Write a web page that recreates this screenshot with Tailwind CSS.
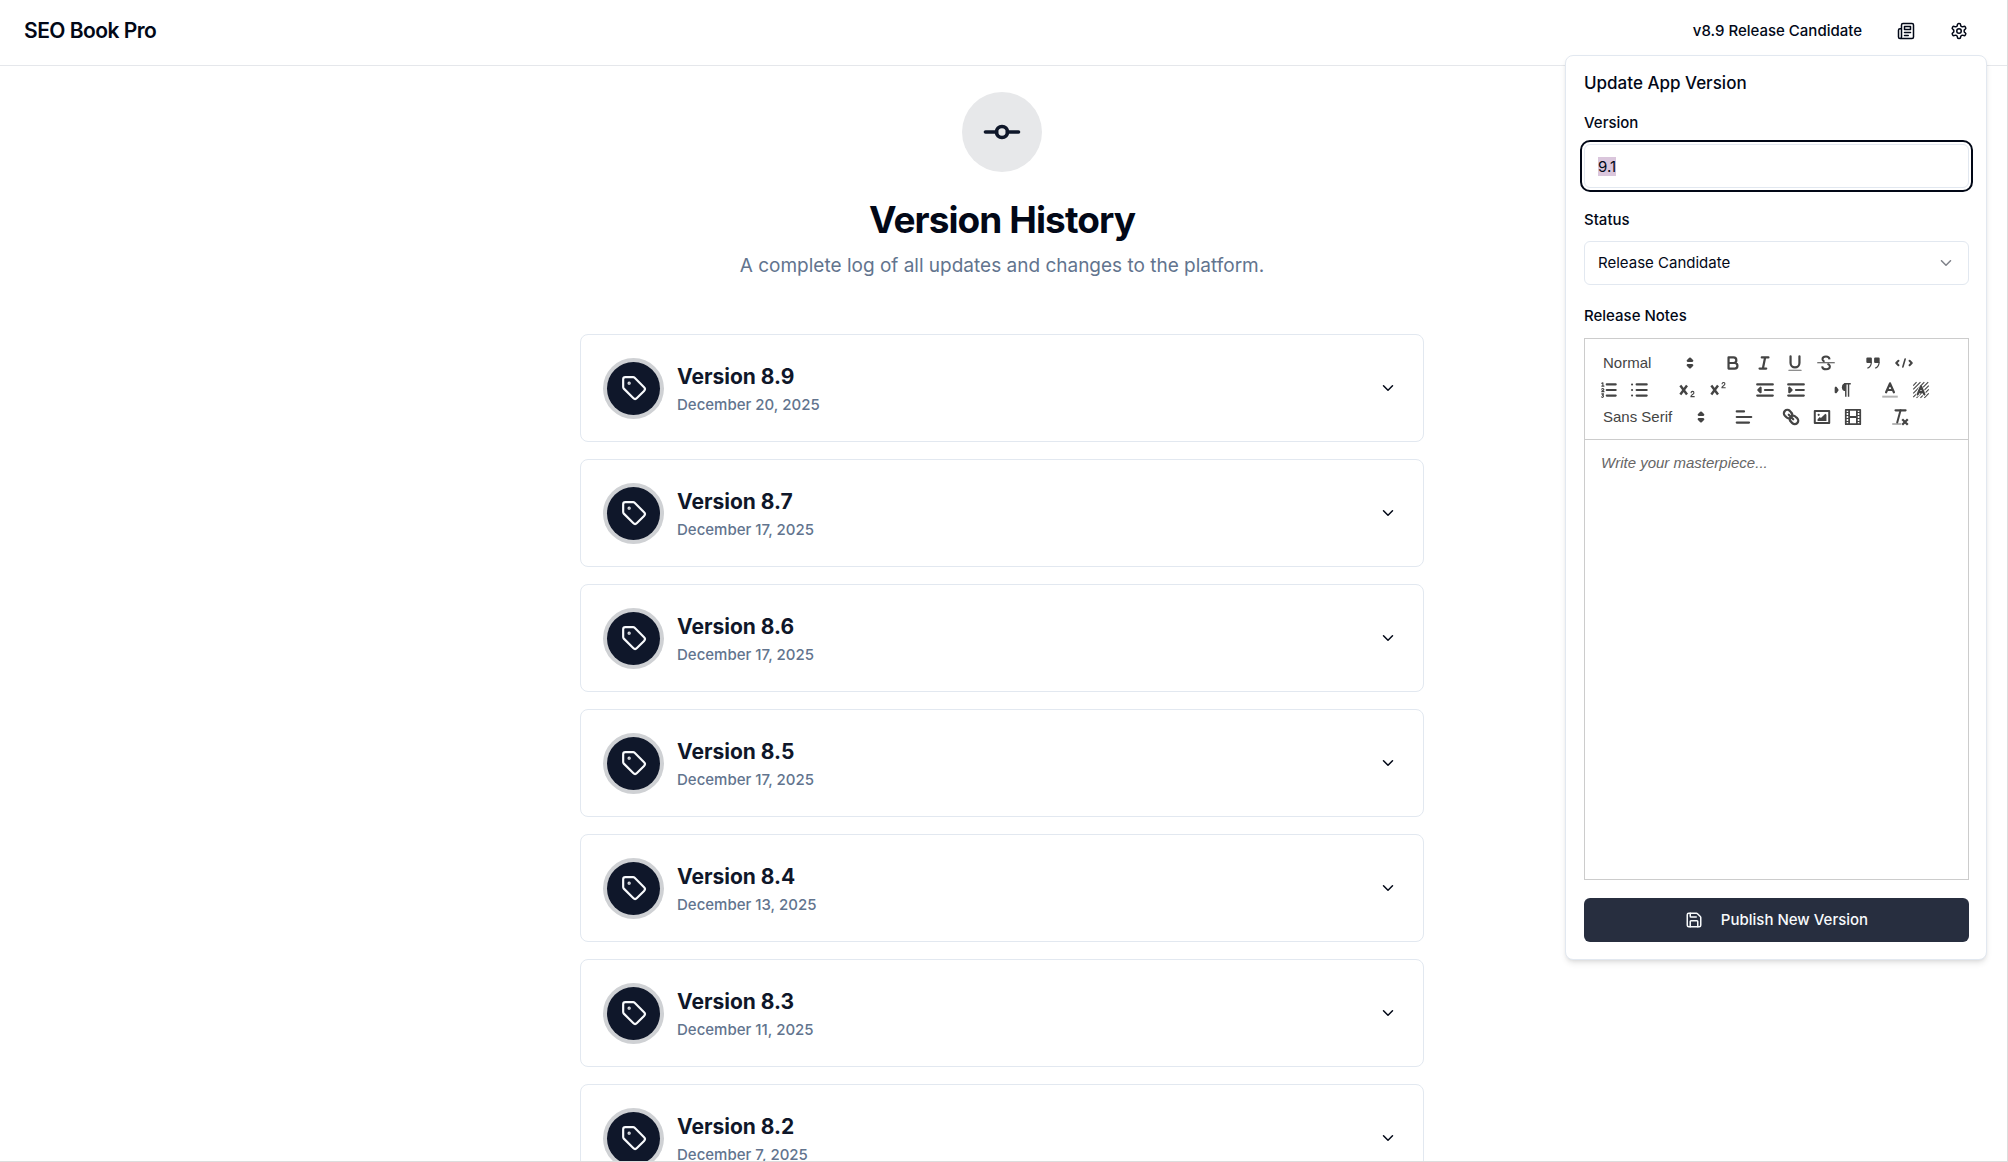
<!DOCTYPE html>
<html lang="en">
<head>
    <meta charset="UTF-8">
    <meta name="viewport" content="width=device-width, initial-scale=1.0">
    <title>SEO Book Pro - Version History</title>
    <script src="https://cdn.jsdelivr.net/npm/@tailwindcss/browser@4"></script>
</head>
<body class="bg-white font-[Inter,sans-serif] text-[#020817] antialiased">
    <div class="relative h-screen overflow-hidden border-r border-b border-[#dddddd]">

        <!-- Header -->
        <header class="flex h-[66px] items-center justify-between border-b border-gray-200 pb-1 pl-6 pr-[39px]">
            <a href="#" class="text-[21px] leading-7 font-semibold tracking-tight">SEO Book Pro</a>
            <div class="flex items-center gap-[35px]">
                <span class="text-[15px] leading-5 font-medium">v8.9 Release Candidate</span>
                <button type="button" aria-label="Changelog">
                    <svg class="size-[18px]" viewBox="0 0 24 24" fill="none" stroke="currentColor" stroke-width="2" stroke-linecap="round" stroke-linejoin="round">
                        <path d="M4 22h16a2 2 0 0 0 2-2V4a2 2 0 0 0-2-2H8a2 2 0 0 0-2 2v16a2 2 0 0 1-2 2Zm0 0a2 2 0 0 1-2-2v-9c0-1.100.9-2 2-2h2"/>
                        <path d="M18 14h-8"/><path d="M15 18h-5"/><path d="M10 6h8v4h-8V6Z"/>
                    </svg>
                </button>
                <button type="button" aria-label="Settings">
                    <svg class="size-[18px]" viewBox="0 0 24 24" fill="none" stroke="currentColor" stroke-width="2" stroke-linecap="round" stroke-linejoin="round">
                        <path d="M12.220 2h-.44a2 2 0 0 0-2 2v.18a2 2 0 0 1-1 1.730l-.43.25a2 2 0 0 1-2 0l-.15-.08a2 2 0 0 0-2.730.73l-.22.38a2 2 0 0 0 .73 2.730l.15.1a2 2 0 0 1 1 1.720v.51a2 2 0 0 1-1 1.740l-.15.09a2 2 0 0 0-.73 2.730l.22.38a2 2 0 0 0 2.730.73l.15-.08a2 2 0 0 1 2 0l.43.25a2 2 0 0 1 1 1.730V20a2 2 0 0 0 2 2h.44a2 2 0 0 0 2-2v-.18a2 2 0 0 1 1-1.730l.43-.25a2 2 0 0 1 2 0l.15.08a2 2 0 0 0 2.730-.73l.22-.39a2 2 0 0 0-.73-2.730l-.15-.08a2 2 0 0 1-1-1.740v-.5a2 2 0 0 1 1-1.740l.15-.09a2 2 0 0 0 .73-2.730l-.22-.38a2 2 0 0 0-2.730-.73l-.15.08a2 2 0 0 1-2 0l-.43-.25a2 2 0 0 1-1-1.730V4a2 2 0 0 0-2-2z"/>
                        <circle cx="12" cy="12" r="3"/>
                    </svg>
                </button>
            </div>
        </header>

        <!-- Version history -->
        <main class="pt-[26px] pr-[3px]">
            <div class="flex flex-col items-center text-center">
                <div class="flex size-20 items-center justify-center rounded-full bg-[#e7e8ea] text-[#0f172a]">
                    <svg class="size-11" viewBox="0 0 24 24" fill="none" stroke="currentColor" stroke-width="2" stroke-linecap="round" stroke-linejoin="round">
                        <circle cx="12" cy="12" r="3"/><path d="M3 12h6"/><path d="M15 12h6"/>
                    </svg>
                </div>
                <h1 class="mt-6 text-[37px] leading-12 font-bold tracking-tight">Version History</h1>
                <p class="mt-2 text-[19px] leading-7 text-slate-500">A complete log of all updates and changes to the platform.</p>
            </div>
            <div id="versionList" class="mx-auto mt-[54px] flex max-w-[844px] flex-col gap-[17px]"></div>
        </main>

        <!-- Update popover -->
        <form id="versionForm" class="absolute top-[55px] right-5 w-[422px] rounded-lg border border-slate-200 bg-white py-[17px] pr-[17px] pl-[18px] shadow-md">
            <h2 class="text-[17px] leading-5 font-medium">Update App Version</h2>

            <label for="versionInput" class="mt-5 block text-[15px] leading-5 font-medium">Version</label>
            <input type="text" id="versionInput" value="9.1" class="mt-[11px] block h-11 w-full rounded-md border border-slate-200 bg-white px-[13px] text-[15px] outline-2 outline-offset-2 outline-[#020817] selection:bg-[#dac6dc] selection:text-[#020817]">

            <label for="statusSelect" class="mt-[22px] block text-[15px] leading-5 font-medium">Status</label>
            <div class="relative mt-[11px]">
                <select id="statusSelect" class="block h-11 w-full appearance-none rounded-md border border-slate-200 bg-white px-[13px] text-[15px]">
                    <option>Release Candidate</option>
                    <option>Beta</option>
                    <option>Stable</option>
                </select>
                <svg class="pointer-events-none absolute top-[13px] right-3.5 size-[18px] opacity-50" viewBox="0 0 24 24" fill="none" stroke="currentColor" stroke-width="2" stroke-linecap="round" stroke-linejoin="round"><path d="m6 9 6 6 6-6"/></svg>
            </div>

            <label for="notesInput" class="mt-[21px] block text-[15px] leading-5 font-medium">Release Notes</label>
            <div class="mt-3 border border-[#cccccc] font-['Liberation_Sans',sans-serif] text-[#444444]">
                <div id="toolbar" class="border-b border-[#cccccc] px-2 pt-2.5 pb-[9px]"></div>
                <textarea id="notesInput" placeholder="Write your masterpiece..." class="block h-[439px] w-full resize-none px-4 py-3 text-[15px] leading-[22px] outline-none placeholder:text-[#666666] placeholder:italic"></textarea>
            </div>

            <button type="submit" class="mt-[18px] flex h-11 w-full items-center justify-center gap-[18px] rounded-md bg-[#272e3f] text-[15px] font-medium text-slate-50">
                <svg class="size-[18px]" viewBox="0 0 24 24" fill="none" stroke="currentColor" stroke-width="2" stroke-linecap="round" stroke-linejoin="round">
                    <path d="M15.200 3a2 2 0 0 1 1.400.6l3.800 3.800a2 2 0 0 1 .6 1.400V19a2 2 0 0 1-2 2H5a2 2 0 0 1-2-2V5a2 2 0 0 1 2-2z"/>
                    <path d="M17 21v-7a1 1 0 0 0-1-1H8a1 1 0 0 0-1 1v7"/><path d="M7 3v4a1 1 0 0 0 1 1h7"/>
                </svg>
                Publish New Version
            </button>
        </form>
    </div>

    <script>
        const versions = [
            { version: '8.9', date: 'December 20, 2025' },
            { version: '8.7', date: 'December 17, 2025' },
            { version: '8.6', date: 'December 17, 2025' },
            { version: '8.5', date: 'December 17, 2025' },
            { version: '8.4', date: 'December 13, 2025' },
            { version: '8.3', date: 'December 11, 2025' },
            { version: '8.2', date: 'December 7, 2025' }
        ];

        // Editor icons, drawn on an 18x18 grid
        const icons = {
            bold: '<path d="M5 4h4.500a2.500 2.500 0 0 1 0 5H5zM5 9h5.500a2.500 2.500 0 0 1 0 5H5z"/>',
            italic: '<path d="M7 4h6M5 14h6M8 14l2-10"/>',
            underline: '<path d="M5 3v6a4 4 0 0 0 8 0V3"/><rect x="3" y="15" width="12" height="1" rx=".5" fill="currentColor" stroke="none" opacity=".8"/>',
            strike: '<path stroke-width="1" d="M1.500 8.800h15"/><path stroke-width="1.800" stroke-linecap="butt" d="M12.200 5.800C12 4 10.800 3.200 9 3.200S5.800 4 5.800 5.700c0 1.200.8 1.800 1.900 2.200M10.300 9.800c1.200.4 2.200 1 2.200 2.400 0 1.600-1.400 2.500-3.400 2.500s-3.400-.9-3.600-2.700"/>',
            quote: '<rect fill="currentColor" x="4" y="5" width="3" height="3"/><rect fill="currentColor" x="11" y="5" width="3" height="3"/><path fill="currentColor" stroke="none" d="M7 8c0 4.031-3 5-3 5-.5.2-.2 1 .4 1C7.200 12.900 8 10.300 8 8zM14 8c0 4.031-3 5-3 5-.5.2-.2 1 .4 1C14.200 12.900 15 10.300 15 8z"/>',
            code: '<path stroke-width="1.800" d="M4 7 2 9l2 2M14 7l2 2-2 2"/><path stroke-width="1.500" d="M10 5.500 8 12.500"/>',
            ordered: '<path d="M7 4h8M7 9h8M7 14h8"/><path stroke-width="1" d="M2.500 5.500h2M3.500 5.500v-3l-1 .5M4.500 10.500h-2c0-1.100 1.850-.9 1.850-2a1 1 0 0 0-1.900-.2M2.500 12.500h1.600l-.9 1.300a.9.9 0 1 1-.8 1.400"/>',
            bullet: '<path d="M6 4h9M6 9h9M6 14h9"/><path stroke-width="1.800" d="M1.800 4h.1M1.800 9h.1M1.800 14h.1"/>',
            sub: '<path stroke-linecap="butt" stroke-width="2.200" d="M3 5 9 13M9 5 3 13"/><path stroke-width="1" d="M15.500 15h-3c0-2 2.700-1.800 2.700-3.400a1.250 1.250 0 0 0-2.500-.2"/>',
            sup: '<path stroke-linecap="butt" stroke-width="2.200" d="M3 5 9 13M9 5 3 13"/><path stroke-width="1" d="M15.500 7h-3c0-2 2.700-1.800 2.700-3.400a1.250 1.250 0 0 0-2.500-.2"/>',
            outdent: '<path d="M2 14h14M2 4h14M9 9h7"/><path fill="currentColor" d="M5 7v4L3 9z"/>',
            indent: '<path d="M2 14h14M2 4h14M9 9h7"/><path fill="currentColor" d="M3 7v4l2-2z"/>',
            direction: '<path fill="currentColor" d="m2.500 11 1.500-2-1.500-2z"/><path stroke-width="1.300" stroke-linecap="butt" d="M11.500 3v12M14 3v12M10 3.400h6"/><path fill="currentColor" stroke="none" d="M11.500 10V3a3.500 3.500 0 0 0 0 7z"/>',
            color: '<path stroke-linecap="butt" opacity=".4" stroke-width="1.800" d="M2 15h14"/><path d="m5.500 11 3.500-8 3.500 8M11.600 9H6.400"/>',
            background: '<path stroke-width="1" stroke-linecap="butt" d="M2 5l3-3M2 8.500 8.500 2M2 12 12 2M2 15.500 15.500 2M5 16 16 5M8.500 16 16 8.500M12 16l4-4"/><path stroke="white" stroke-width="3.500" d="m6 13 3-7 3 7"/><path d="m6 13 3-7.500 3 7.500M11 11H7"/>',
            align: '<path d="M2.500 9h13M2.500 14h11M2.500 4h6.500"/>',
            link: '<path d="m7 7 4 4M8.900 4.600a3.500 3.500 0 0 1 .4 4.700 3.500 3.500 0 0 1-4.700-.4L3.500 7.900a2.900 2.900 0 0 1 4.400-4.400zM13.400 9.100a3.500 3.500 0 0 0-4.700-.4 3.500 3.500 0 0 0 .4 4.700l1.100 1.100a2.900 2.900 0 0 0 4.400-4.400z"/>',
            image: '<rect x="2.500" y="3.500" width="13" height="11" stroke-width="1.800"/><circle cx="6" cy="7" r="1" fill="currentColor" stroke="none"/><path fill="currentColor" stroke="none" d="M5 12.500v-1.500l2-2 1 1 4-4 1 1v5.500z"/>',
            video: '<path stroke-width="1.600" d="M2.500 2.500h13v13h-13zM5.500 2.500v13M12.500 2.500v13M5.500 9h7"/><path stroke-width="1" d="M3 5h2.500M3 7.700h2.500M3 10.300h2.500M3 13h2.500M12.500 5H15M12.500 7.700H15M12.500 10.300H15M12.500 13H15"/>',
            clean: '<path stroke-width="2" d="M5 3h9"/><path stroke-width="1.800" d="M6.500 14 9.500 3"/><path stroke-width="2" stroke-linecap="butt" d="m11 11 5 5M16 11l-5 5"/><path stroke-linecap="butt" opacity=".7" stroke-width="1" d="M2 15.300h8"/>'
        };

        const arrows = '<svg class="pointer-events-none absolute right-px size-5" viewBox="0 0 18 18" fill="currentColor" stroke="currentColor" stroke-width="2" stroke-linejoin="round"><path d="m7 11 2 2 2-2zM7 7l2-2 2 2z"/></svg>';

        const headerPicker = `<div class="relative flex w-[108px] items-center"><select aria-label="Heading" class="w-full appearance-none pl-2.5 text-[15px] leading-[27px]"><option>Normal</option><option>Heading 1</option></select>${arrows}</div>`;
        const fontPicker = `<div class="relative flex w-[119px] items-center"><select aria-label="Font" class="w-full appearance-none pl-2.5 text-[15px] leading-[27px]"><option>Sans Serif</option><option>Monospace</option></select>${arrows}</div>`;

        const rows = [
            [headerPicker, ['bold', 'italic', 'underline', 'strike'], ['quote', 'code']],
            [['ordered', 'bullet'], ['sub', 'sup'], ['outdent', 'indent'], ['direction'], ['color', 'background']],
            [fontPicker, ['align'], ['link', 'image', 'video'], ['clean']]
        ];

        function renderGroup(group) {
            if (!Array.isArray(group)) return group;
            return '<div class="flex">' + group.map(name => `
                <button type="button" aria-label="${name}" class="flex h-[27px] w-[31px] items-center justify-center">
                    <svg class="size-5" viewBox="0 0 18 18" fill="none" stroke="currentColor" stroke-width="2" stroke-linecap="round" stroke-linejoin="round">${icons[name]}</svg>
                </button>`).join('') + '</div>';
        }

        document.getElementById('toolbar').innerHTML = rows.map(row =>
            `<div class="flex h-[27px] gap-4">${row.map(renderGroup).join('')}</div>`
        ).join('');

        document.getElementById('versionList').innerHTML = versions.map(v => `
            <button type="button" class="flex h-[108px] w-full shrink-0 items-center rounded-lg border border-slate-200 bg-white px-[26px] text-left">
                <span class="flex size-[53px] items-center justify-center rounded-full bg-[#0f172a] text-slate-50 ring-4 ring-[#cfd1d4]">
                    <svg class="size-[26px]" viewBox="0 0 24 24" fill="none" stroke="currentColor" stroke-width="2" stroke-linecap="round" stroke-linejoin="round">
                        <path d="M12.586 2.586A2 2 0 0 0 11.172 2H4a2 2 0 0 0-2 2v7.172a2 2 0 0 0 .586 1.414l8.704 8.704a2.426 2.426 0 0 0 3.420 0l6.580-6.580a2.426 2.426 0 0 0 0-3.420z"/>
                        <circle cx="7.500" cy="7.500" r=".5" fill="currentColor"/>
                    </svg>
                </span>
                <span class="ml-[17px] flex-1 pt-0.5">
                    <span class="block text-[21px] leading-8 font-bold text-[#0f172a]">Version ${v.version}</span>
                    <span class="block text-[15px] leading-6 font-medium text-slate-500">${v.date}</span>
                </span>
                <svg class="size-[18px]" viewBox="0 0 24 24" fill="none" stroke="currentColor" stroke-width="2" stroke-linecap="round" stroke-linejoin="round"><path d="m6 9 6 6 6-6"/></svg>
            </button>
        `).join('');

        document.getElementById('versionForm').addEventListener('submit', function(e) {
            e.preventDefault();
        });

        // Ready to type over the suggested version
        document.getElementById('versionInput').select();
    </script>
</body>
</html>
